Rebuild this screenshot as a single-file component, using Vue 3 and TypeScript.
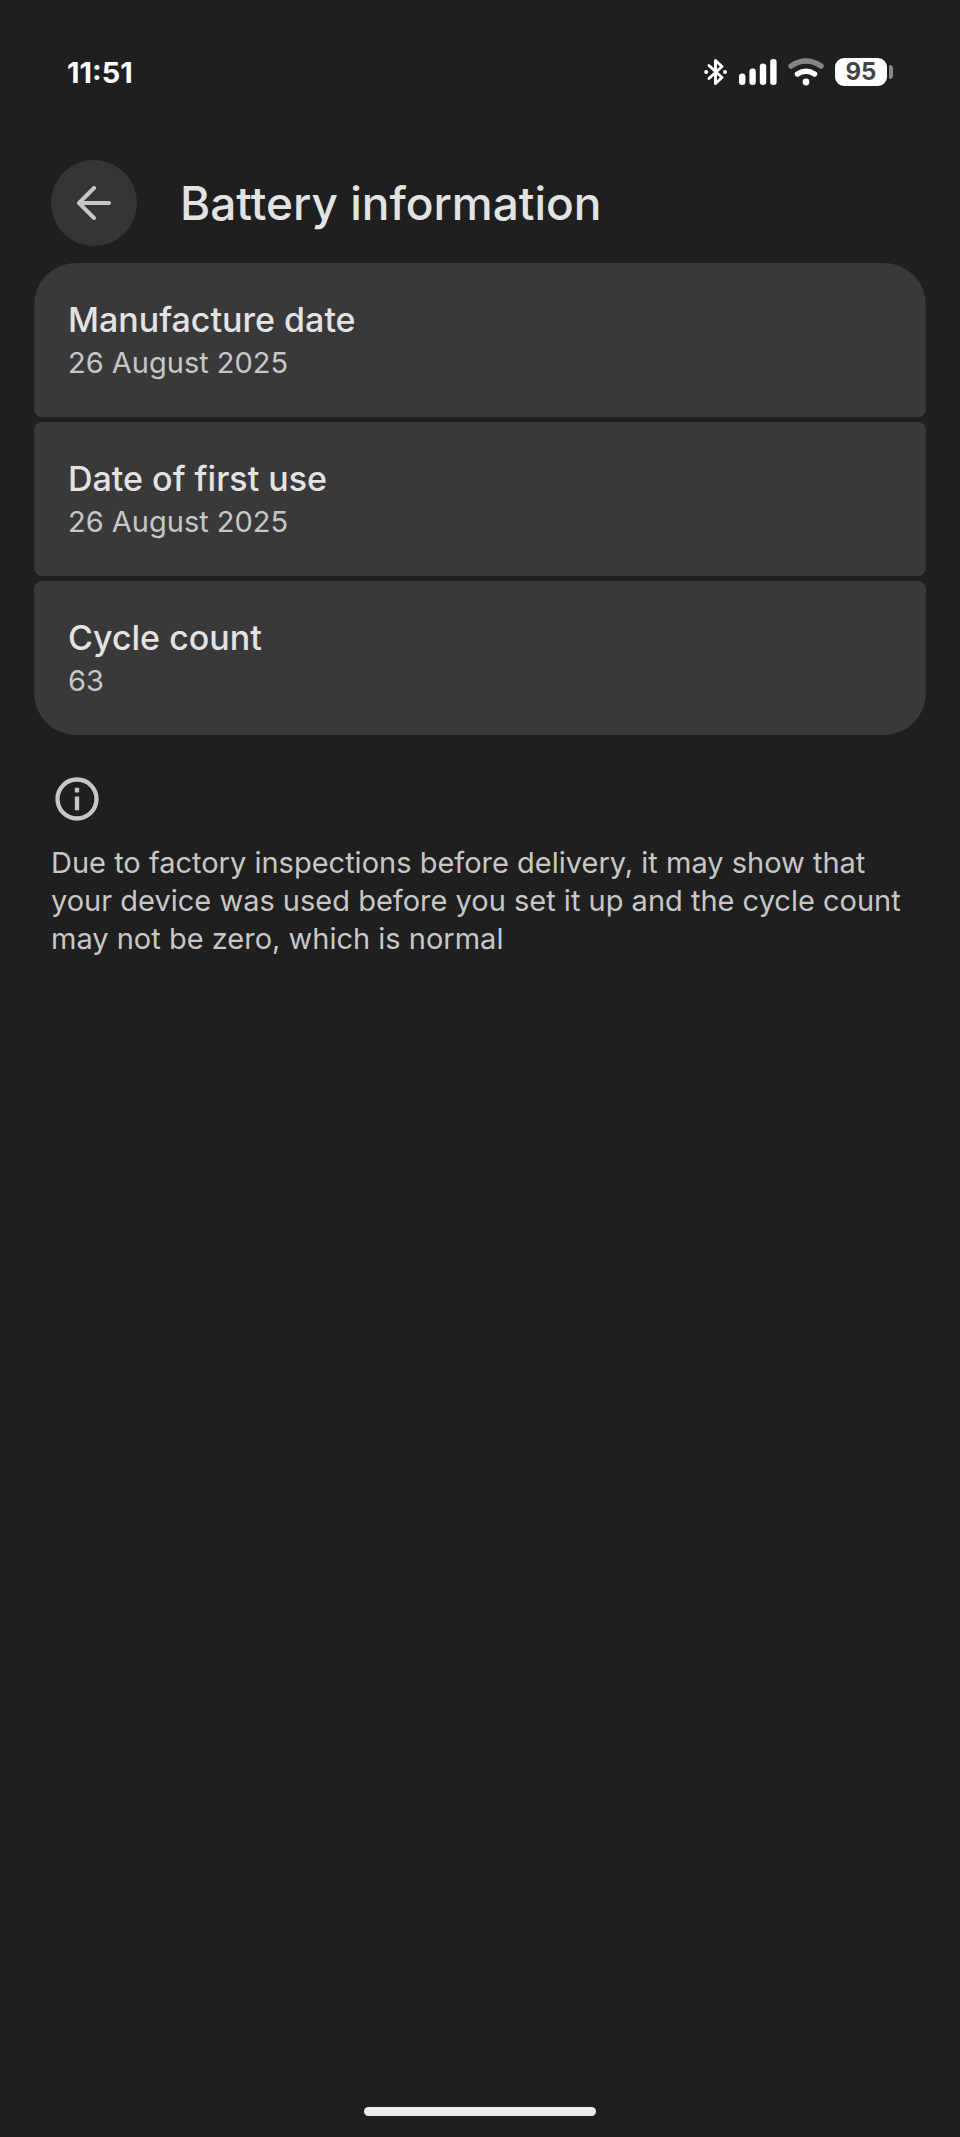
<script setup lang="ts">
interface Detail {
  label: string
  value: string
}

const time = '11:51'
const batteryLevel = 95

const details: Detail[] = [
  { label: 'Manufacture date', value: '26 August 2025' },
  { label: 'Date of first use', value: '26 August 2025' },
  { label: 'Cycle count', value: '63' },
]

function goBack(): void {
  window.history.back()
}
</script>

<template>
  <div class="screen">
    <div class="status">
      <time class="clock">{{ time }}</time>
      <div class="indicators">
        <svg class="bluetooth" viewBox="0 0 24 28" role="img" aria-label="Bluetooth on">
          <path d="M5 7.500 L18 19.500 L11.500 25.500 V2.500 L18 8.500 L5 20.500" />
          <circle cx="2.200" cy="14" r="2" />
          <circle cx="21" cy="14" r="2" />
        </svg>
        <svg class="signal" viewBox="0 0 38 28" role="img" aria-label="Full signal">
          <rect x="0" y="15.500" width="6.400" height="11.500" rx="3" />
          <rect x="10.400" y="10.500" width="6.400" height="16.500" rx="3" />
          <rect x="20.800" y="5.500" width="6.400" height="21.500" rx="3" />
          <rect x="31.200" y="1" width="6.400" height="26" rx="3" />
        </svg>
        <svg class="wifi" viewBox="0 0 36 28" role="img" aria-label="Wi-Fi connected">
          <path class="dim" d="M3 8 Q18 -2 33 8" />
          <path d="M9.500 16 Q18 10.500 26.500 16" />
          <circle cx="18" cy="24" r="3.400" />
        </svg>
        <div class="battery">
          <span class="level">{{ batteryLevel }}</span>
          <span class="cap"></span>
        </div>
      </div>
    </div>

    <header class="toolbar">
      <button class="back" type="button" aria-label="Back" @click="goBack">
        <svg viewBox="0 0 34 34" aria-hidden="true">
          <path d="M17 2 L2 17 L17 32 M2 17 H32" />
        </svg>
      </button>
      <h1>Battery information</h1>
    </header>

    <main>
      <dl class="cards">
        <div v-for="item in details" :key="item.label" class="card">
          <dt>{{ item.label }}</dt>
          <dd>{{ item.value }}</dd>
        </div>
      </dl>

      <section class="note">
        <svg viewBox="0 0 24 24" aria-hidden="true">
          <circle cx="12" cy="12" r="9" />
          <path d="M12 10.900 V17.200 M12 6.800 V9" />
        </svg>
        <p>
          Due to factory inspections before delivery, it may show that your device was used before
          you set it up and the cycle count may not be zero, which is normal
        </p>
      </section>
    </main>

    <div class="home"></div>
  </div>
</template>

<style>
body {
  background: #1f1f1f;
}
</style>

<style scoped>
.screen {
  box-sizing: border-box;
  min-height: 100vh;
  display: flex;
  flex-direction: column;
  padding: 52px 34px 21px;
  background: #1f1f1f;
  color: #e3e3e3;
  font-family: Inter, Roboto, sans-serif;
}

.status {
  display: flex;
  align-items: center;
  justify-content: space-between;
  height: 40px;
  padding: 0 33px;
  color: #fff;
}

.clock {
  font-size: 29px;
  font-weight: 700;
}

.indicators {
  display: flex;
  align-items: center;
  gap: 11px;
}

.indicators svg {
  height: 28px;
  fill: #fff;
  stroke: none;
}

.bluetooth {
  width: 24px;
}

.bluetooth path {
  fill: none;
  stroke: #fff;
  stroke-width: 3;
  stroke-linejoin: round;
  stroke-linecap: round;
}

.signal {
  width: 38px;
}

.wifi {
  width: 36px;
}

.wifi path {
  fill: none;
  stroke: #fff;
  stroke-width: 5.5;
  stroke-linecap: round;
}

.wifi .dim {
  stroke: #858585;
}

.battery {
  display: flex;
  align-items: center;
  gap: 2px;
}

.level {
  width: 52px;
  border-radius: 9px;
  background: #fff;
  color: #444;
  font-size: 24px;
  font-weight: 700;
  line-height: 28px;
  text-align: center;
}

.cap {
  width: 4px;
  height: 14px;
  border-radius: 1px 3px 3px 1px;
  background: #858585;
}

.toolbar {
  display: flex;
  align-items: center;
  gap: 43px;
  margin-top: 68px;
  padding: 0 17px;
}

.back {
  display: grid;
  place-items: center;
  flex: none;
  width: 86px;
  height: 86px;
  padding: 0;
  border: 0;
  border-radius: 50%;
  background: #353535;
  cursor: pointer;
}

.back svg {
  width: 34px;
  fill: none;
  stroke: #c7c7c7;
  stroke-width: 4;
  stroke-linecap: round;
  stroke-linejoin: round;
}

h1 {
  margin: 0;
  font-size: 46px;
  font-weight: 500;
  line-height: 56px;
}

.cards {
  display: flex;
  flex-direction: column;
  gap: 5px;
  margin: 17px 0 0;
  border-radius: 42px;
  overflow: hidden;
}

.card {
  display: flex;
  flex-direction: column;
  gap: 2px;
  padding: 35px 34px;
  border-radius: 8px;
  background: #393939;
}

dt {
  font-size: 34px;
  font-weight: 500;
  line-height: 44px;
}

dd {
  margin: 0;
  color: #c7c7c7;
  font-size: 29px;
  line-height: 38px;
}

.note {
  margin-top: 38px;
  padding: 0 17px;
  color: #c7c7c7;
}

.note svg {
  display: block;
  width: 52px;
  fill: none;
  stroke: #c7c7c7;
  stroke-width: 2;
}

.note p {
  margin: 19px 0 0;
  font-size: 29px;
  line-height: 38px;
}

.home {
  width: 26vw;
  max-width: 232px;
  height: 9px;
  margin: auto auto 0;
  border-radius: 5px;
  background: #ececec;
}
</style>
